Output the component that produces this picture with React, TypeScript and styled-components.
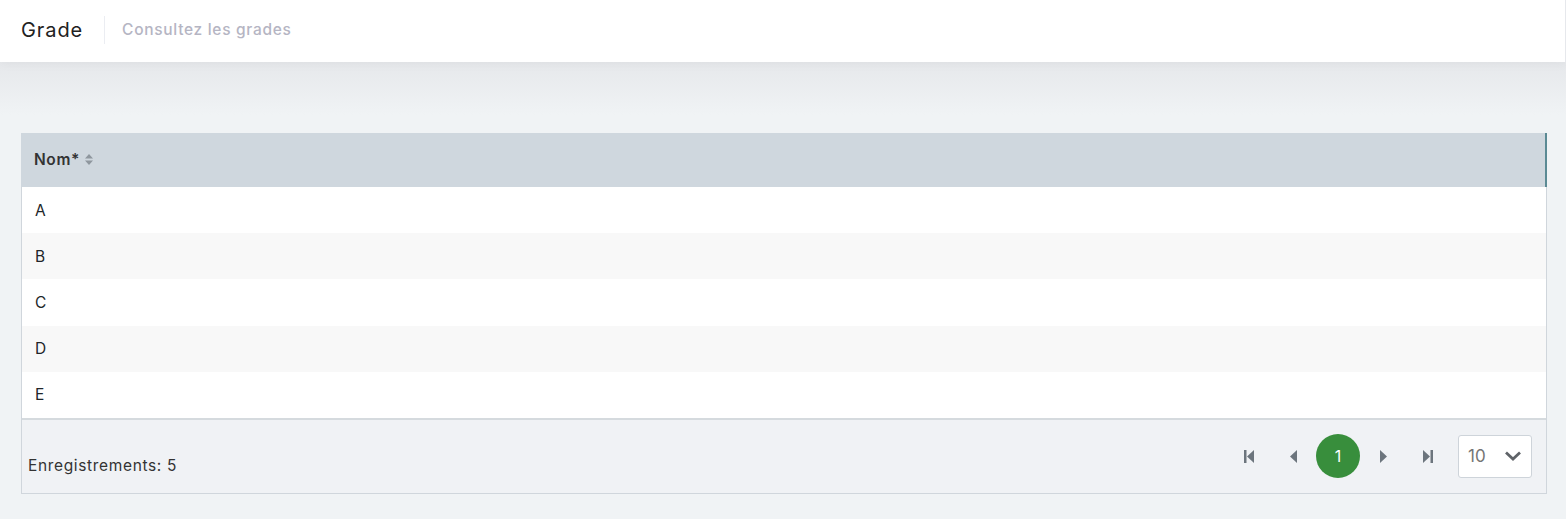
import styled, { createGlobalStyle } from "styled-components";

const Global = createGlobalStyle`
  html, body { margin: 0; padding: 0; }
  body {
    font-family: "Inter", "Noto Sans", sans-serif;
    background: #f0f3f5;
    color: #212529;
  }
`;

const Page = styled.div`
  min-height: 519px;
  background: linear-gradient(#e6e8eb 62px, #f0f3f5 115px, #f0f3f5 100%);
`;

const Header = styled.div`
  height: 62px;
  background: #ffffff;
  display: flex;
  align-items: center;
  padding: 0 0 3px 21px;
  box-shadow: 0 2px 10px rgba(0, 0, 0, 0.04);
  border-right: 1px solid #e6e8ec;
  box-sizing: border-box;
`;

const Title = styled.h3`
  margin: 0;
  font-size: 20px;
  font-weight: 400;
  letter-spacing: 0.9px;
  color: #212121;
  padding-right: 21px;
  margin-right: 17px;
  border-right: 1px solid #ebedf2;
  line-height: 28px;
`;

const Subtitle = styled.span`
  font-size: 15.5px;
  font-weight: 500;
  letter-spacing: 0.7px;
  color: #b5b5c3;
`;

const Content = styled.div`
  padding: 71px 19px 0 21px;
`;

const Table = styled.div`
  border: 1px solid #d0d6dc;
  border-top: none;
  background: #ffffff;
`;

const HeadRow = styled.div`
  height: 54px;
  background: #cfd7de;
  display: flex;
  align-items: center;
  padding: 0 0 2px 13px;
  box-sizing: border-box;
  margin: 0 -1px 0 -1px;
  border-right: 2px solid #5b8a94;
`;

const HeadCell = styled.span`
  font-size: 15.5px;
  font-weight: 600;
  letter-spacing: 0.6px;
  color: #333333;
  display: flex;
  align-items: center;
  gap: 4px;
`;

const Row = styled.div<{ $odd: boolean }>`
  height: 46.2px;
  display: flex;
  align-items: center;
  padding-left: 13px;
  font-size: 15.5px;
  color: #212529;
  background: ${({ $odd }) => ($odd ? "#f8f8f8" : "#ffffff")};
`;

const Footer = styled.div`
  height: 73px;
  background: #f0f2f5;
  border-top: 2px solid #d5dade;
  display: flex;
  align-items: center;
  justify-content: space-between;
  padding: 0 14px 0 6px;
`;

const Count = styled.span`
  font-size: 15.5px;
  letter-spacing: 0.65px;
  color: #333333;
  margin-top: 18px;
`;

const Pager = styled.div`
  display: flex;
  align-items: center;
`;

const NavBtn = styled.button`
  width: 44px;
  height: 44px;
  border: none;
  background: transparent;
  display: flex;
  align-items: center;
  justify-content: center;
  padding: 0;
  color: #6c757d;
`;

const PageBtn = styled.button`
  width: 44px;
  height: 44px;
  border-radius: 50%;
  border: none;
  background: #388e3c;
  color: #ffffff;
  font-family: inherit;
  font-size: 16px;
  display: flex;
  align-items: center;
  justify-content: center;
  margin: 0 1px;
`;

const Select = styled.div`
  width: 74px;
  height: 43px;
  margin-left: 9px;
  background: #ffffff;
  border: 1px solid #ced4da;
  border-radius: 3px;
  display: flex;
  align-items: center;
  justify-content: space-between;
  padding: 0 9px 0 9px;
  box-sizing: border-box;
  font-size: 17px;
  color: #757575;
`;

const SortIcon = () => (
  <svg width="10" height="13" viewBox="0 0 10 13">
    <path d="M5 1 L9 5.5 H1 Z M5 12 L9 7.5 H1 Z" fill="#8f979e" />
  </svg>
);

const First = () => (
  <svg width="11" height="13" viewBox="0 0 11 13">
    <rect x="0" y="0" width="2.5" height="13" fill="currentColor" />
    <path d="M10 0 V13 L3 6.5 Z" fill="currentColor" />
  </svg>
);

const Prev = () => (
  <svg width="7" height="13" viewBox="0 0 7 13">
    <path d="M7 0 V13 L0 6.5 Z" fill="currentColor" />
  </svg>
);

const Next = () => (
  <svg width="7" height="13" viewBox="0 0 7 13">
    <path d="M0 0 V13 L7 6.5 Z" fill="currentColor" />
  </svg>
);

const Last = () => (
  <svg width="11" height="13" viewBox="0 0 11 13">
    <path d="M1 0 V13 L8 6.5 Z" fill="currentColor" />
    <rect x="8.5" y="0" width="2.5" height="13" fill="currentColor" />
  </svg>
);

const Chevron = () => (
  <svg width="18" height="12" viewBox="0 0 18 12">
    <path d="M2 2.5 L9 9 L16 2.5" fill="none" stroke="#5f6368" strokeWidth="2.8" />
  </svg>
);

const grades = ["A", "B", "C", "D", "E"];

export default function App() {
  return (
    <>
      <Global />
      <Page>
        <Header>
          <Title>Grade</Title>
          <Subtitle>Consultez les grades</Subtitle>
        </Header>
        <Content>
          <Table>
            <HeadRow>
              <HeadCell>
                Nom* <SortIcon />
              </HeadCell>
            </HeadRow>
            {grades.map((g, i) => (
              <Row key={g} $odd={i % 2 === 1}>
                {g}
              </Row>
            ))}
            <Footer>
              <Count>Enregistrements: 5</Count>
              <Pager>
                <NavBtn><First /></NavBtn>
                <NavBtn><Prev /></NavBtn>
                <PageBtn>1</PageBtn>
                <NavBtn><Next /></NavBtn>
                <NavBtn><Last /></NavBtn>
                <Select>
                  10
                  <Chevron />
                </Select>
              </Pager>
            </Footer>
          </Table>
        </Content>
      </Page>
    </>
  );
}
